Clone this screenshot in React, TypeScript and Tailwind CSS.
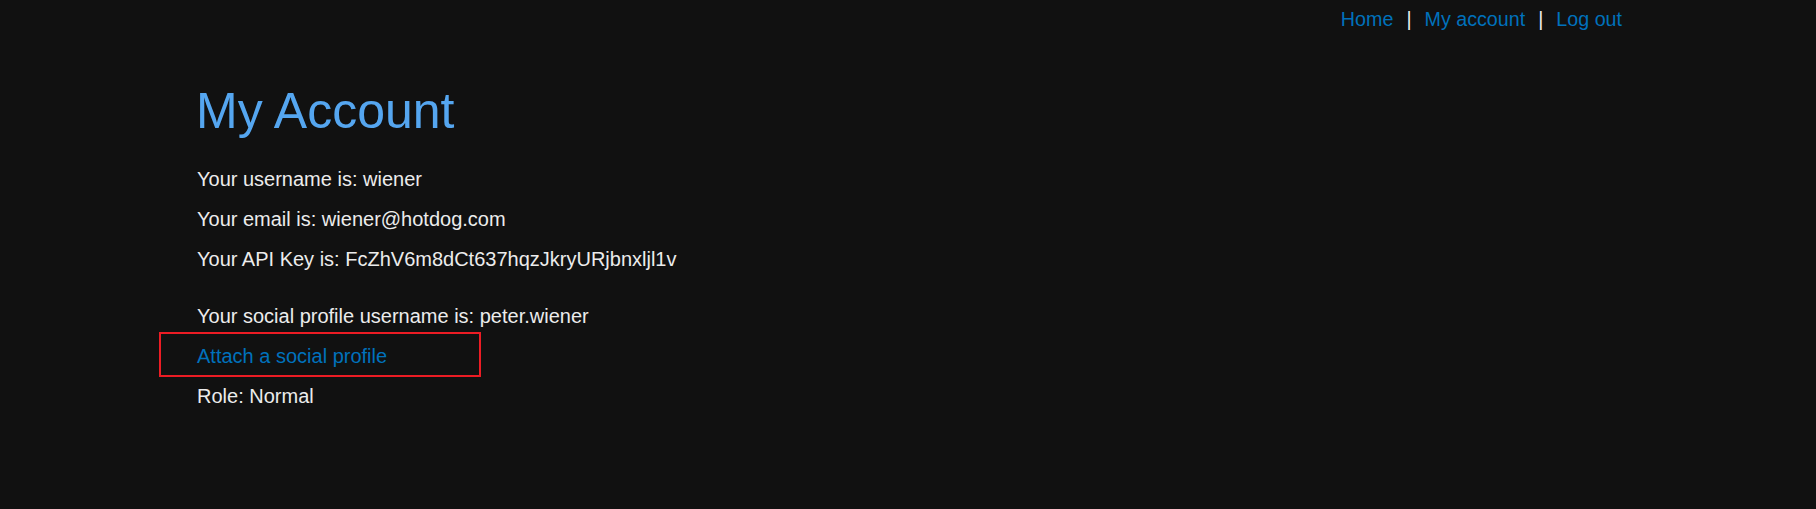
import * as React from 'react';

const font = "font-['Liberation_Sans',Arial,sans-serif]";

export default function App() {
  return (
    <div className={`min-h-[509px] w-full bg-[#111111] ${font}`}>
      <div className="px-[194px]">
        {/* top links */}
        <header className="flex justify-end pt-[4px]">
          <nav className="flex items-center text-[19.7px] leading-[30px]">
            <a href="#" className="text-[#0071bc]">Home</a>
            <span className="mx-[13px] text-[#eeeeee]">|</span>
            <a href="#" className="text-[#0071bc]">My account</a>
            <span className="mx-[13px] text-[#eeeeee]">|</span>
            <a href="#" className="text-[#0071bc]">Log out</a>
          </nav>
        </header>

        {/* account details */}
        <main className="pl-[3px] pt-[49px]">
          <h1 className="-ml-[1px] text-[50px] leading-[56px] text-[#55a6f0]">My Account</h1>
          <div className="mt-[20px] text-[20px] leading-[40px] text-[#ececec]">
            <p>Your username is: wiener</p>
            <p>Your email is: wiener@hotdog.com</p>
            <p>Your API Key is: FcZhV6m8dCt637hqzJkryURjbnxljl1v</p>
            <p className="mt-[17px]">Your social profile username is: peter.wiener</p>
            <p className="relative">
              <a href="#" className="text-[#0071bc]">Attach a social profile</a>
              <span className="pointer-events-none absolute left-[-38px] top-[-4px] h-[45px] w-[322px] border-2 border-[#ec1c24]" />
            </p>
            <p>Role: Normal</p>
          </div>
        </main>
      </div>
    </div>
  );
}
